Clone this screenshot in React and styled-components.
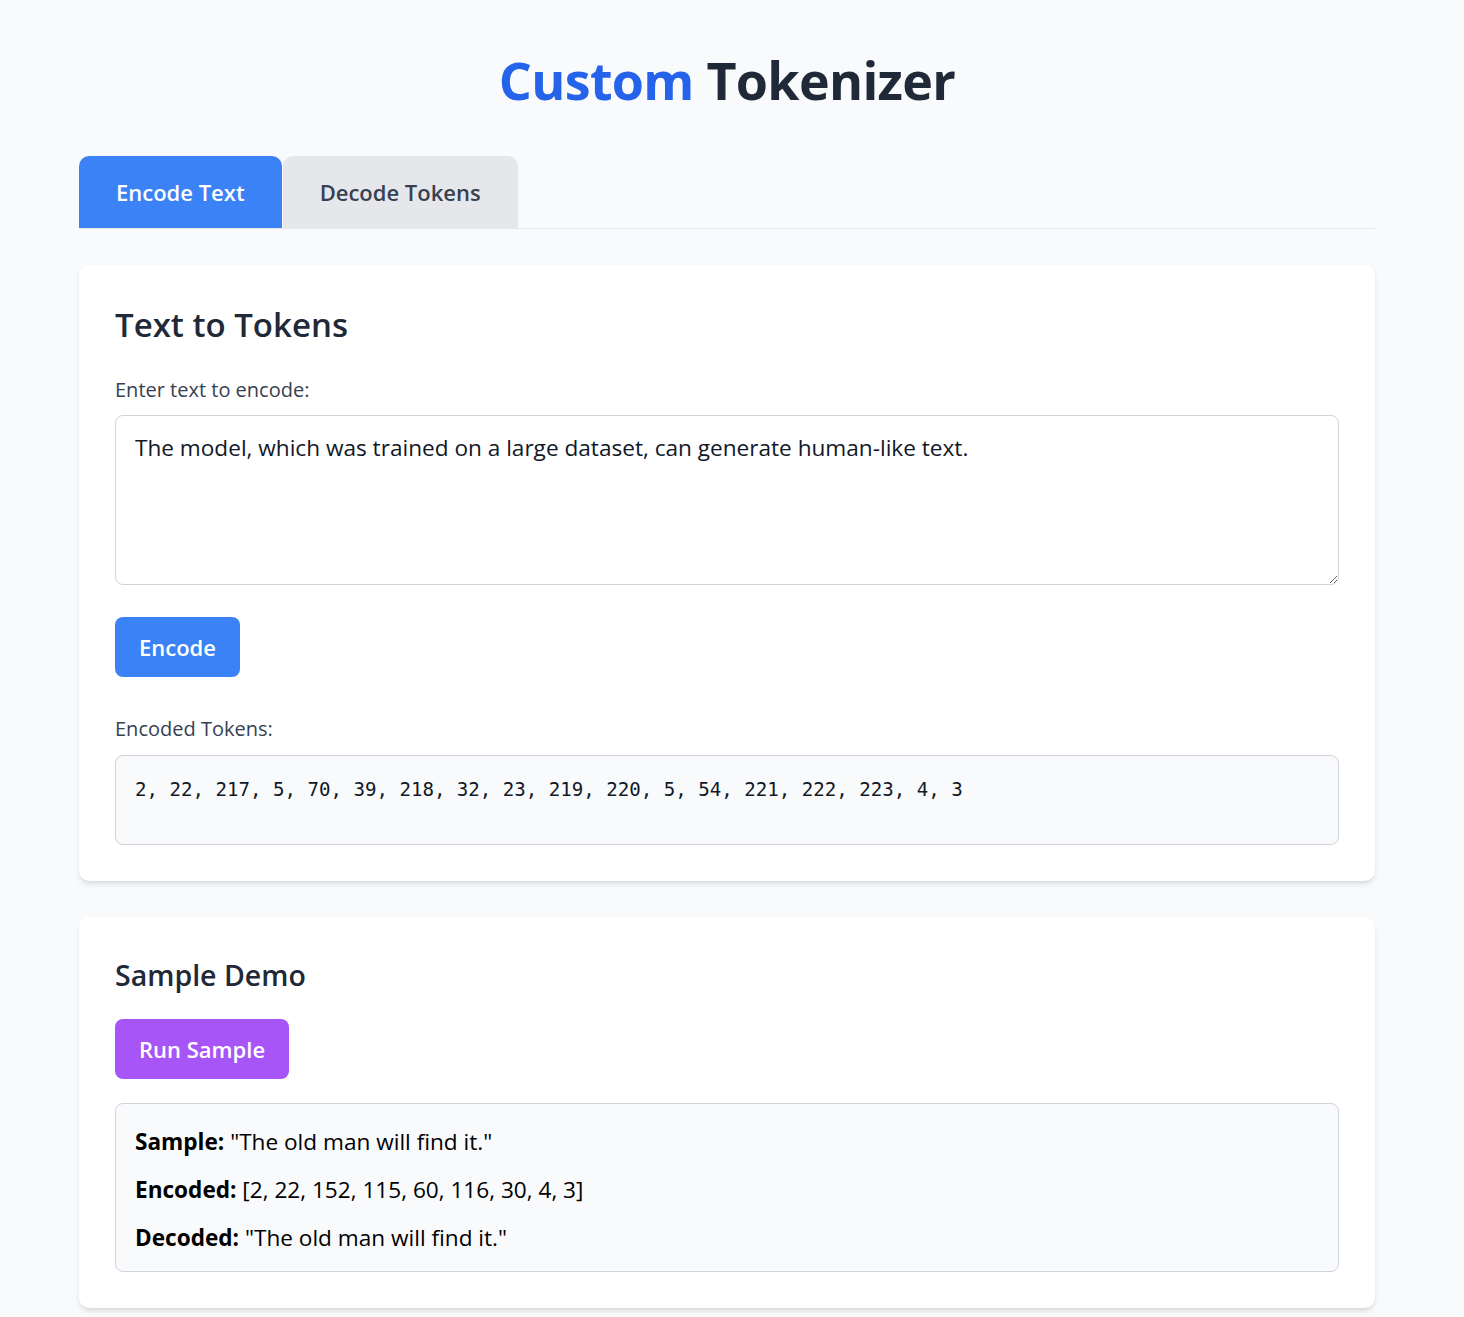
import React, { useState } from "react";
import styled, { createGlobalStyle } from "styled-components";

const GlobalStyle = createGlobalStyle`
  * {
    box-sizing: border-box;
  }
  body {
    margin: 0;
    background: #f9fafb;
    font-family: "Open Sans", "Noto Sans", sans-serif;
    color: #111827;
  }
`;

const tokens = [2, 22, 217, 5, 70, 39, 218, 32, 23, 219, 220, 5, 54, 221, 222, 223, 4, 3];

const App = () => {
  const [tab, setTab] = useState("encode");
  const [text, setText] = useState(
    "The model, which was trained on a large dataset, can generate human-like text."
  );

  return (
    <Page>
      <GlobalStyle />
      <Container>
        <Title>
          <Accent>Custom</Accent> Tokenizer
        </Title>

        <Tabs>
          <Tab active={tab === "encode"} onClick={() => setTab("encode")}>
            Encode Text
          </Tab>
          <Tab active={tab === "decode"} onClick={() => setTab("decode")}>
            Decode Tokens
          </Tab>
        </Tabs>

        <Card>
          <Heading>Text to Tokens</Heading>
          <Label>Enter text to encode:</Label>
          <TextArea value={text} onChange={(e) => setText(e.target.value)} />
          <Button>Encode</Button>
          <Label top>Encoded Tokens:</Label>
          <Output>{tokens.join(", ")}</Output>
        </Card>

        <Card>
          <SubHeading>Sample Demo</SubHeading>
          <Button purple>Run Sample</Button>
          <ResultBox>
            <Line>
              <b>Sample:</b> "The old man will find it."
            </Line>
            <Line>
              <b>Encoded:</b> [2, 22, 152, 115, 60, 116, 30, 4, 3]
            </Line>
            <Line>
              <b>Decoded:</b> "The old man will find it."
            </Line>
          </ResultBox>
        </Card>
      </Container>
    </Page>
  );
};

export default App;

const Page = styled.div`
  padding: 50px 10px 8px 0;
`;

const Container = styled.div`
  max-width: 1296px;
  margin: 0 auto;
  display: flex;
  flex-direction: column;
`;

const Title = styled.h1`
  margin: 0 0 46px;
  text-align: center;
  font-size: 52px;
  line-height: 60px;
  letter-spacing: -0.7px;
  font-weight: 700;
  color: #1f2937;
`;

const Accent = styled.span`
  color: #2563eb;
`;

const Tabs = styled.div`
  display: flex;
  gap: 1px;
  border-bottom: 1px solid #e5e7eb;
  margin-bottom: 36px;
`;

const Tab = styled.button`
  height: 72px;
  padding: 0 37px;
  border: none;
  border-radius: 10px 10px 0 0;
  font-family: inherit;
  font-size: 22px;
  font-weight: 600;
  cursor: pointer;
  background: ${(p) => (p.active ? "#3b82f6" : "#e5e7eb")};
  color: ${(p) => (p.active ? "#ffffff" : "#374151")};
`;

const Card = styled.div`
  background: #ffffff;
  border-radius: 10px;
  padding: 36px;
  margin-bottom: 36px;
  box-shadow: 0 4px 6px -1px rgba(0, 0, 0, 0.1), 0 2px 4px -2px rgba(0, 0, 0, 0.1);
  display: flex;
  flex-direction: column;
  align-items: flex-start;
`;

const Heading = styled.h2`
  margin: 1px 0 28px;
  font-size: 33px;
  line-height: 45px;
  font-weight: 600;
  color: #1f2937;
`;

const SubHeading = styled.h3`
  margin: 4px 0 25px;
  font-size: 28.5px;
  line-height: 37px;
  font-weight: 600;
  color: #1f2937;
`;

const Label = styled.label`
  display: block;
  margin: ${(p) => (p.top ? "37px 0 11px" : "0 0 10px")};
  font-size: 20px;
  line-height: 30px;
  font-weight: 500;
  color: #374151;
`;

const TextArea = styled.textarea`
  width: 100%;
  height: 170px;
  padding: 15px 19px;
  border: 1px solid #d1d5db;
  border-radius: 8px;
  font-family: inherit;
  font-size: 22.6px;
  line-height: 33px;
  color: #111827;
  background: #ffffff;
  outline: none;
  margin-bottom: 32px;
`;

const Button = styled.button`
  height: 60px;
  padding: 0 24px;
  border: none;
  border-radius: 8px;
  font-family: inherit;
  font-size: 22px;
  font-weight: 600;
  color: #ffffff;
  cursor: pointer;
  background: ${(p) => (p.purple ? "#a855f7" : "#3b82f6")};
  margin-bottom: ${(p) => (p.purple ? "24px" : "0")};
`;

const Output = styled.div`
  width: 100%;
  min-height: 90px;
  padding: 20px 19px;
  border: 1px solid #d1d5db;
  border-radius: 8px;
  background: #f9fafb;
  font-family: "DejaVu Sans Mono", "Liberation Mono", monospace;
  font-size: 19.1px;
  line-height: 28px;
  color: #111827;
`;

const ResultBox = styled.div`
  width: 100%;
  padding: 20px 19px 15px;
  border: 1px solid #d1d5db;
  border-radius: 8px;
  background: #f9fafb;
`;

const Line = styled.p`
  margin: 0 0 12px;
  font-size: 22.6px;
  line-height: 36px;
  color: #000000;

  &:last-child {
    margin-bottom: 0;
  }

  b {
    font-weight: 700;
  }
`;
